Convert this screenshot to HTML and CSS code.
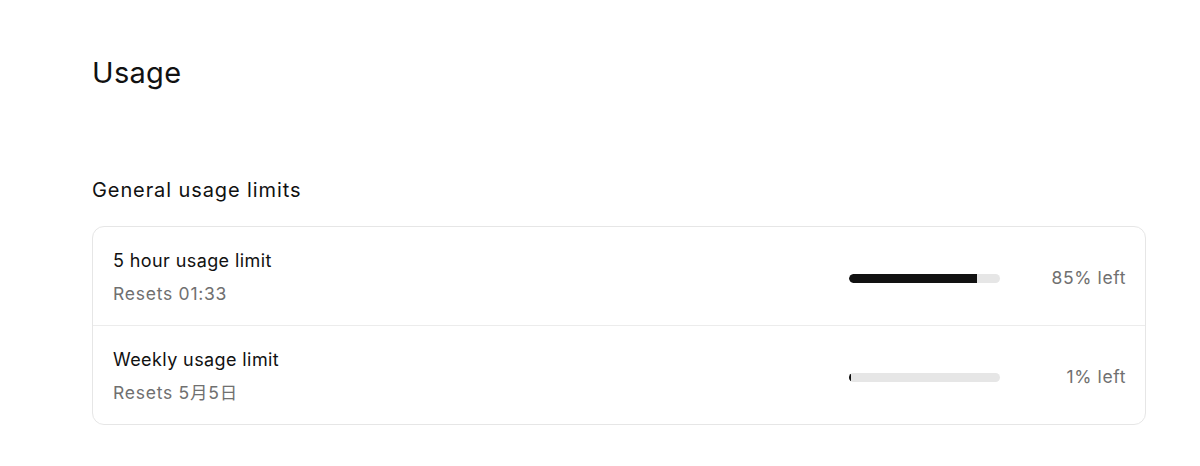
FILE: index.html
```html
<!DOCTYPE html>
<html lang="en">
<head>
  <meta charset="UTF-8" />
  <meta name="viewport" content="width=device-width, initial-scale=1.0"/>
  <title>Usage</title>
  <link rel="stylesheet" href="styles.css">
</head>
<body>
  <main class="page">
    <h1>Usage</h1>

    <section class="limits">
      <h2>General usage limits</h2>

      <div class="card">
        <div class="row">
          <div class="info">
            <div class="name">5 hour usage limit</div>
            <div class="reset">Resets 01:33</div>
          </div>
          <div class="bar"><div class="fill" style="width: 85%"></div></div>
          <div class="left">85% left</div>
        </div>
        <div class="row">
          <div class="info">
            <div class="name">Weekly usage limit</div>
            <div class="reset">Resets 5月5日</div>
          </div>
          <div class="bar"><div class="fill" style="width: 1%"></div></div>
          <div class="left">1% left</div>
        </div>
      </div>
    </section>
  </main>
</body>
</html>
```

FILE: styles.css
```css
body {
  margin: 0;
  font-family: Inter, "Noto Sans CJK SC", sans-serif;
  color: #111;
  background: #fff;
}
.page {
  padding: 53px 54px 0 92px;
}
h1 {
  margin: 0;
  font-size: 29px;
  font-weight: 400;
  line-height: 40px;
  letter-spacing: 0.3px;
}
.limits {
  margin-top: 84px;
}
h2 {
  margin: 0 0 23px;
  font-size: 20px;
  font-weight: 400;
  line-height: 26px;
  letter-spacing: 0.9px;
}
.card {
  border: 1px solid #e6e6e6;
  border-radius: 12px;
}
.row {
  display: flex;
  align-items: center;
  padding: 22px 19px 19px 20px;
}
.row + .row {
  border-top: 1px solid #ececec;
}
.info {
  flex: 1;
}
.name {
  font-size: 18px;
  line-height: 24px;
  letter-spacing: 0.4px;
}
.reset {
  margin-top: 9px;
  font-size: 17.5px;
  line-height: 24px;
  letter-spacing: 0.75px;
  color: #707070;
}
.bar {
  width: 151px;
  height: 9px;
  margin-top: 2px;
  border-radius: 5px;
  background: #e6e6e6;
  overflow: hidden;
}
.fill {
  height: 100%;
  background: #111;
  border-radius: 5px 0 0 5px;
}
.left {
  width: 110px;
  margin-left: 16px;
  text-align: right;
  font-size: 17.5px;
  letter-spacing: 0.6px;
  color: #707070;
}
```
